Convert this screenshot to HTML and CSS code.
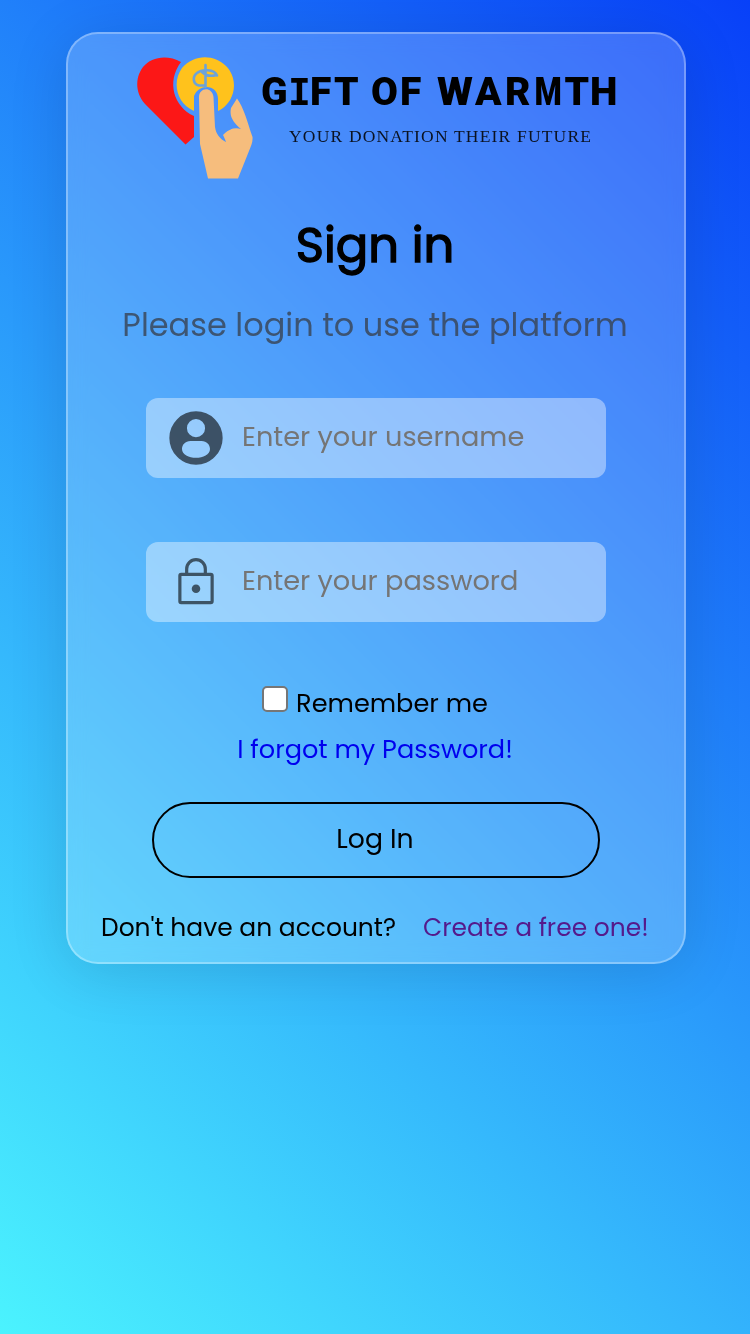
FILE: index.html
```html
<!DOCTYPE html>
<html lang="en">
<head>
<meta charset="utf-8">
<title>Sign in</title>
<link rel="stylesheet" href="styles.css">
</head>
<body>
<main class="card">
  <svg class="logo" viewBox="68 34 616 160" role="img" aria-label="Gift of Warmth">
    <path class="heart" d="M181 62C167 54 151 57 143 67C134 79 136 95 146 105L185.500 144.500L194 137V116C174 107 166 82 181 62Z"/>
    <path class="coin" d="M194 111C176 103 172 82 182 68C194 54 214 54 226 66C239 79 236 102 218 111V99C218 84 199 83 194 96Z"/>
    <path class="coin-mark" d="M205.500 65V87M217 75.500C214 69 202 69 197 73C192 77 193 84 199 85.500H205M202 72C207 77 213 76 216.500 75"/>
    <path class="hand" d="M199 99C198 87 212 86 213.500 97L215 127C216 134 220 139 226 142C225 139 224 137 223 135C228 129 235 127 241 129C234 123 229 117 231 108L237 98.500C244 108 247 121 252.500 137C253 142 251 146 249 151L238 178.500H208L200 144Z"/>
    <text class="brand" y="105" x="261 288 310 334"><tspan>G</tspan><tspan class="slab">I</tspan><tspan>FT</tspan></text>
    <text class="brand" y="105" x="371 400">OF</text>
    <text class="brand" transform="translate(437 105) scale(1.060 1)">W</text>
    <text class="brand" y="105" x="475 505">AR</text>
    <text class="brand" transform="translate(534.500 105) scale(.8 1)">M</text>
    <text class="brand" y="105" x="564.500 590">TH</text>
    <text class="tagline" x="289" y="142" textLength="302">YOUR DONATION THEIR FUTURE</text>
  </svg>
  <h1 class="title"><span>Sign in</span></h1>
  <p class="subtitle"><span>Please login to use the platform</span></p>
  <form class="form">
    <label class="field">
      <svg class="icon" viewBox="0 0 24 24"><path fill="currentColor" fill-rule="evenodd" d="M12 2a10 10 0 1 0 0 20a10 10 0 0 0 0-20ZM12 4.900a3.400 3.400 0 1 1 0 6.800a3.400 3.400 0 0 1 0-6.800ZM9.900 13.100h4.200c1.900 0 3.150 1.400 3.150 3c0 2-2.600 3.350-5.250 3.350s-5.250-1.350-5.250-3.350c0-1.600 1.250-3 3.150-3Z"/></svg>
      <input class="input username" type="text" placeholder="Enter your username">
    </label>
    <label class="field">
      <svg class="icon" viewBox="0 0 24 24"><path fill="none" stroke="currentColor" stroke-width="1.200" d="M8.500 9.150V7.100a3.500 3.500 0 0 1 7 0V9.150M6.450 9.150h11.100q.5 0 .5 .5v9.600q0 .5-.5 .5h-11.100q-.5 0-.5-.5v-9.600q0-.5 .5-.5Z"/><circle cx="12" cy="14.500" r="1.600" fill="currentColor"/></svg>
      <input class="input password" type="password" placeholder="Enter your password">
    </label>
    <label class="remember"><input class="check" type="checkbox"><span class="remember-text">Remember me</span></label>
    <a class="forgot" href="#"><span>I forgot my Password!</span></a>
    <button class="login" type="button">Log In</button>
    <div class="signup"><span class="question">Don't have an account?</span><a class="create" href="#">Create a free one!</a></div>
  </form>
</main>
</body>
</html>
```
FILE: styles.css
```css
* { box-sizing: border-box; }
body {
  margin: 0;
  height: 1334px;
  padding-top: 32px;
  overflow: hidden;
  background: linear-gradient(45deg, #4bf3fe, #0840f8);
  font-family: Poppins, Inter, sans-serif;
  font-size: 25.6px;
  font-weight: 400;
  color: #000;
}
.card {
  width: 620px;
  height: 932px;
  margin-left: 66px;
  border: 2px solid rgba(255, 255, 255, .3);
  border-radius: 32px;
  background: rgba(255, 255, 255, .2);
  backdrop-filter: blur(10px);
  box-shadow: 0 8px 60px rgba(0, 0, 0, .12);
}
.logo { display: block; width: 616px; height: 160px; }
.heart { fill: #fc1717; }
.coin { fill: #ffc21c; }
.coin-mark { fill: none; stroke: #6da3d8; stroke-width: 2.6; stroke-linecap: round; }
.hand { fill: #f6bd7d; }
.brand { font: 900 39px Roboto, sans-serif; }
.slab { font: bold 38px "DejaVu Sans Mono", monospace; }
.tagline { font: 17.500px "Liberation Serif", serif; fill: #0b1220; }
.title {
  margin: 0;
  height: 106px;
  padding-right: 2px;
  line-height: 104px;
  font-size: 48px;
  font-weight: 400;
  -webkit-text-stroke: 1.4px #000;
  text-align: center;
}
.subtitle {
  margin: 0 0 48px;
  height: 50px;
  padding-right: 2px;
  line-height: 50px;
  font-size: 32px;
  text-align: center;
  white-space: nowrap;
  color: rgba(56, 66, 80, .8);
}
.form { display: flex; flex-direction: column; align-items: center; }
.field {
  display: flex;
  align-items: center;
  width: 460px;
  height: 80px;
  margin-bottom: 64px;
  padding-left: 18px;
  gap: 14px;
  border-radius: 12px;
  background: rgba(255, 255, 255, .4);
}
.field + .remember { margin-top: -6px; }
.icon { width: 64px; height: 64px; color: rgba(0, 0, 0, .6); }
.input {
  flex: 1;
  min-width: 0;
  height: 76px;
  padding: 0 0 2px;
  border: 0;
  outline: 0;
  background: none;
  font: inherit;
  font-size: 27.2px;
}
.input::placeholder { color: #757575; }
.remember { display: flex; height: 46px; padding-right: 2px; line-height: 46px; gap: 8px; }
.check {
  appearance: none;
  width: 26px;
  height: 26px;
  margin: 6px 0 0;
  border: 2px solid #767676;
  border-radius: 5px;
  background: #fff;
}
.remember-text, .forgot, .question, .create { white-space: nowrap; }
.forgot { height: 46px; padding-right: 2px; line-height: 46px; color: #0000ee; text-decoration: none; }
.login {
  width: 448px;
  height: 76px;
  margin: 30px 0 26px;
  padding: 0 2px 2px 0;
  border: 2px solid #000;
  border-radius: 38px;
  background: none;
  color: #000;
  font: inherit;
  font-size: 26.67px;
}
.signup { display: flex; align-self: stretch; height: 48px; line-height: 48px; padding-left: 33px; font-size: 24.96px; }
.question { width: 322px; }
.create { color: #551a8b; text-decoration: none; }
```
